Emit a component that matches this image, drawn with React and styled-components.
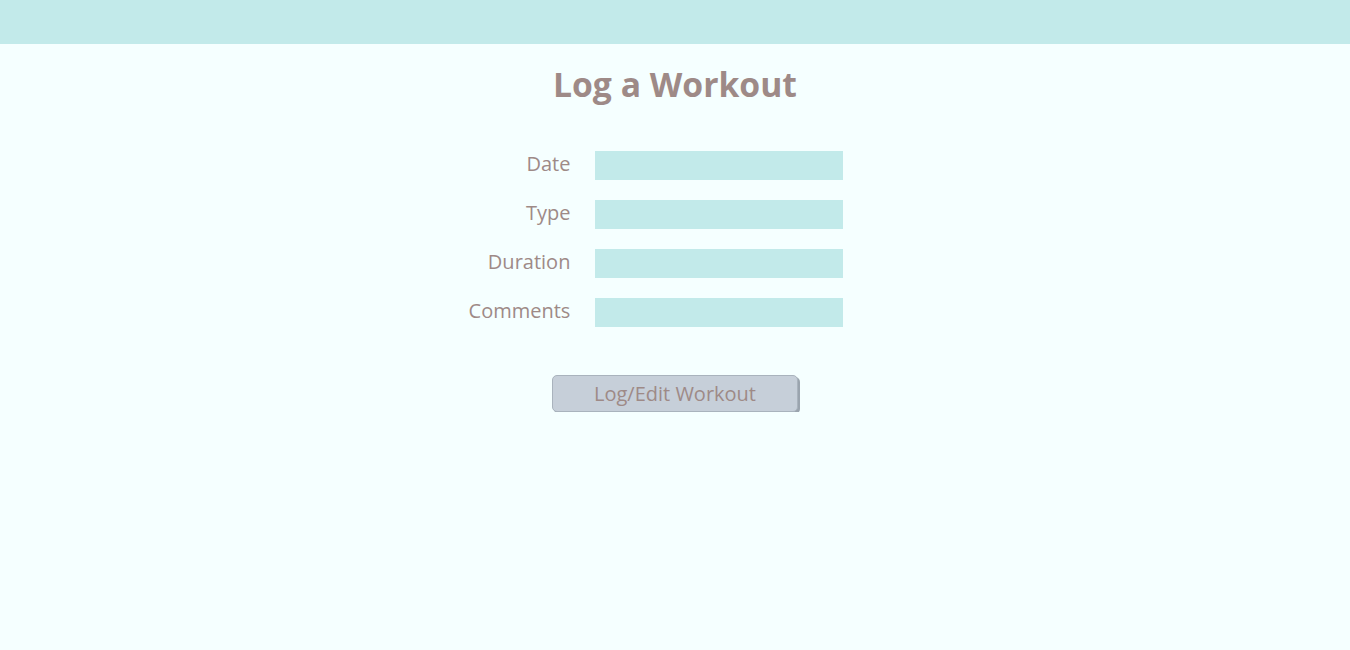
import styled, { createGlobalStyle } from 'styled-components';

const GlobalStyle = createGlobalStyle`
  body {
    margin: 0;
    background: #f5ffff;
    font-family: 'Open Sans', 'Noto Sans', sans-serif;
  }
`;

const Header = styled.header`
  background: #c2eaea;
  height: 44px;
`;

const Title = styled.h1`
  color: #9e8a87;
  font-size: 33.7px;
  font-weight: 700;
  margin: 17px 0 0;
  text-align: center;
`;

const Form = styled.form`
  display: flex;
  flex-direction: column;
  align-items: center;
  margin-top: 44px;
`;

const Fields = styled.div`
  display: grid;
  grid-template-columns: auto 248px;
  column-gap: 25px;
  row-gap: 20px;
  padding-right: 38px;
`;

const Label = styled.label`
  color: #9e8a87;
  font-size: 20px;
  line-height: 25px;
  text-align: right;
`;

const Input = styled.input`
  background: #c2eaea;
  border: none;
  height: 29px;
  margin: 0;
  padding: 0;
  outline: none;
`;

const Button = styled.button`
  background: #c6cfd9;
  border: 1px solid #a9b3bd;
  border-radius: 5px;
  box-shadow: 2px 2px 0 #9aa4ae;
  color: #9e8a87;
  font-family: 'Open Sans', 'Noto Sans', sans-serif;
  font-size: 20px;
  height: 37px;
  margin-top: 48px;
  width: 246px;
`;

const fields = ['Date', 'Type', 'Duration', 'Comments'];

export default function App() {
  return (
    <>
      <GlobalStyle />
      <Header />
      <Title>Log a Workout</Title>
      <Form onSubmit={(e) => e.preventDefault()}>
        <Fields>
          {fields.map((f) => (
            <>
              <Label key={f + 'l'}>{f}</Label>
              <Input key={f} />
            </>
          ))}
        </Fields>
        <Button type="submit">Log/Edit Workout</Button>
      </Form>
    </>
  );
}
